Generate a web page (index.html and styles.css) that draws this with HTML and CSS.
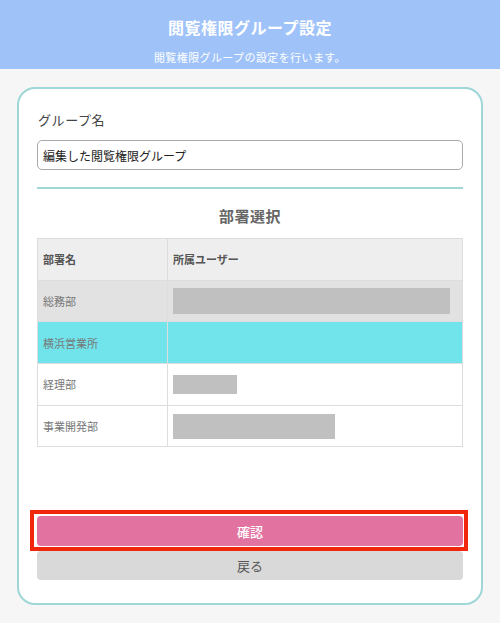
FILE: index.html
```html
<!DOCTYPE html>
<html lang="ja">
<head>
<meta charset="utf-8">
<title>閲覧権限グループ設定</title>
<link rel="stylesheet" href="styles.css">
</head>
<body>
<header class="page-header">
  <h1 class="page-title">閲覧権限グループ設定</h1>
  <p class="page-subtitle">閲覧権限グループの設定を行います。</p>
</header>
<main class="card">
  <label class="field-label" for="group-name">グループ名</label>
  <input class="text-input" id="group-name" type="text" value="編集した閲覧権限グループ">
  <hr class="divider">
  <h2 class="section-title">部署選択</h2>
  <table class="dept-table">
    <thead>
      <tr><th class="col-name">部署名</th><th>所属ユーザー</th></tr>
    </thead>
    <tbody>
      <tr class="row-gray"><td>総務部</td><td><span class="user-bar" style="width:277px;height:26px"></span></td></tr>
      <tr class="row-selected"><td>横浜営業所</td><td></td></tr>
      <tr><td>経理部</td><td><span class="user-bar" style="width:64px;height:19px"></span></td></tr>
      <tr><td>事業開発部</td><td><span class="user-bar" style="width:162px;height:25px"></span></td></tr>
    </tbody>
  </table>
  <div class="actions">
    <button class="btn btn-confirm" type="button">確認</button>
    <button class="btn btn-back" type="button">戻る</button>
  </div>
</main>
</body>
</html>
```
FILE: styles.css
```css
* { box-sizing: border-box; }
html, body { margin: 0; padding: 0; }
body {
  background: #f6f6f6;
  font-family: "Noto Sans CJK JP", "Noto Sans", sans-serif;
  color: #444;
  width: 500px;
  min-height: 623px;
}
.page-header {
  background: #9fc3f9;
  height: 69px;
  padding-top: 16px;
  text-align: center;
  color: #fff;
}
.page-title {
  margin: 0;
  font-size: 16px;
  line-height: 22px;
  font-weight: bold;
  letter-spacing: 0.5px;
}
.page-subtitle {
  margin: 12px 0 0;
  font-size: 11px;
  line-height: 14px;
  letter-spacing: 0.4px;
}
.card {
  margin: 18px 17px 0;
  background: #fff;
  border: 2px solid #9fd6d7;
  border-radius: 18px;
  padding: 22px 18px 23px;
  display: flex;
  flex-direction: column;
}
.field-label {
  display: block;
  font-size: 13px;
  line-height: 18px;
  color: #444;
  padding-left: 1px;
  letter-spacing: 0.6px;
  margin-bottom: 11px;
}
.text-input {
  width: 100%;
  height: 30px;
  border: 1px solid #aaa;
  border-radius: 5px;
  padding: 0 5px;
  font-family: inherit;
  font-size: 12px;
  color: #222;
  background: #fff;
}
.divider {
  margin: 17px 0 0;
  border: 0;
  height: 2px;
  background: #9fd6d6;
}
.section-title {
  margin: 16px 0 11px;
  text-align: center;
  font-size: 15px;
  line-height: 22px;
  font-weight: bold;
  color: #666;
  letter-spacing: 0.5px;
}
.dept-table {
  width: 100%;
  border-collapse: collapse;
  font-size: 11px;
  table-layout: fixed;
}
.dept-table th, .dept-table td {
  border: 1px solid #ddd;
  height: 41.7px;
  padding: 0 5px;
  text-align: left;
  vertical-align: middle;
}
.dept-table th {
  background: #eee;
  color: #555;
  font-weight: bold;
}
.dept-table .col-name { width: 130px; }
.dept-table td { color: #777; background: #fff; }
.row-gray td { background: #e2e2e2; }
.row-selected td { background: #70e4ea; }
.user-bar {
  display: block;
  background: #c0c0c0;
}
.actions {
  margin-top: 69px;
  display: flex;
  flex-direction: column;
  gap: 5px;
}
.btn {
  width: 100%;
  border: 0;
  border-radius: 4px;
  font-family: inherit;
  font-size: 13px;
  cursor: pointer;
}
.btn-confirm {
  position: relative;
  height: 30px;
  background: #e272a0;
  color: #fff;
  font-weight: 500;
}
.btn-confirm::after {
  content: "";
  position: absolute;
  top: -6px;
  left: -7px;
  right: -5px;
  bottom: -5px;
  border: 4px solid #f2260c;
  pointer-events: none;
}
.btn-back {
  height: 29px;
  background: #d9d9d9;
  color: #555;
}
```
